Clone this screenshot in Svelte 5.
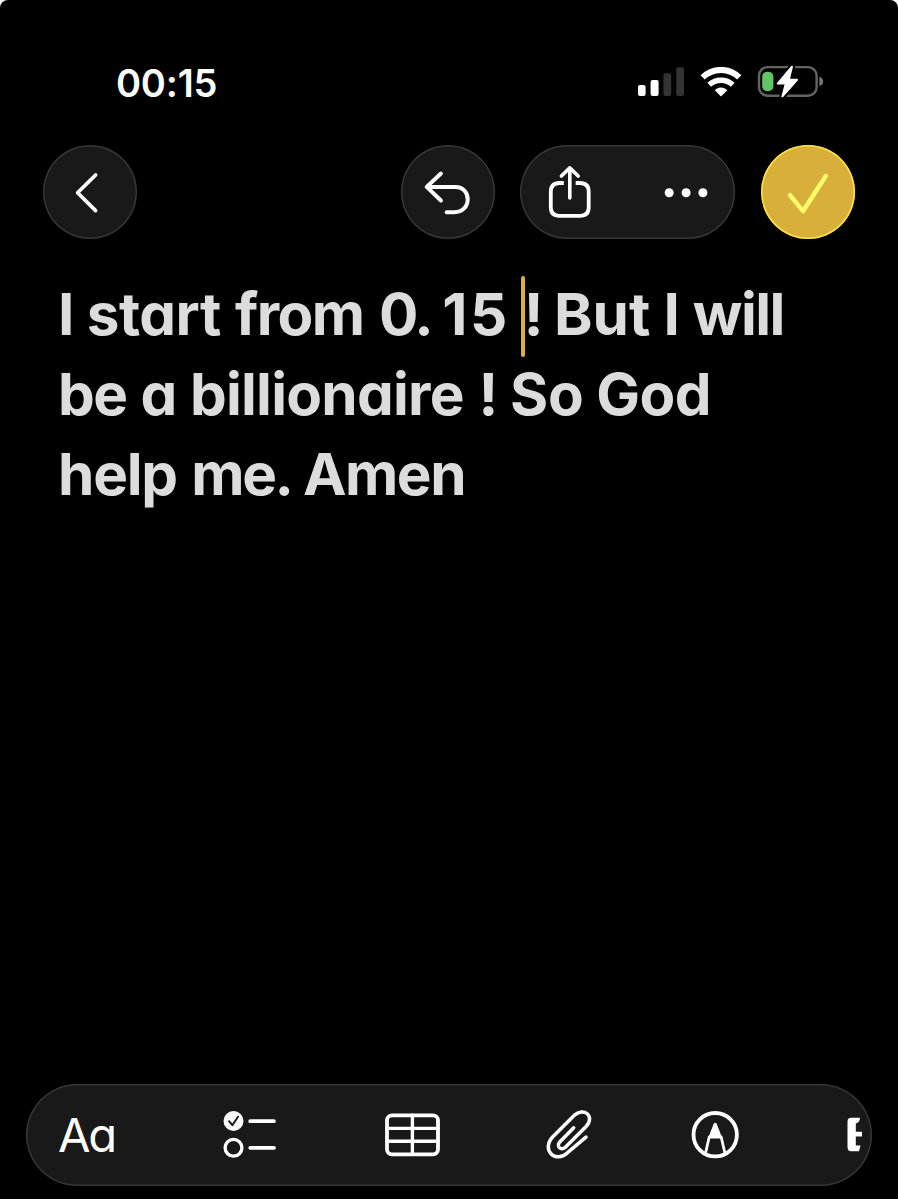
<script>
  // Each word carries its column width and tracking.
  const lines = [
    [
      { t: 'I', w: 28.8, s: 0 },
      { t: 'start', w: 148.3, s: -0.5 },
      { t: 'from', w: 144, s: -1.6 },
      { t: '0.', w: 63.2, s: -2.4 },
      { t: '15', w: 81.5, s: 2.5 },
      { t: '!', w: 30.2, s: 0, caret: true },
      { t: 'But', w: 109.5, s: 0 },
      { t: 'I', w: 29.3, s: 0 },
      { t: 'will', w: 100, s: -1.5 }
    ],
    [
      { t: 'be', w: 82.4, s: -1.5 },
      { t: 'a', w: 49.5, s: 0 },
      { t: 'billionaire', w: 288.6, s: -0.75 },
      { t: '!', w: 31.4, s: 0 },
      { t: 'So', w: 86.3, s: 0 },
      { t: 'God', w: 130, s: -0.5 }
    ],
    [
      { t: 'help', w: 133.3, s: -1.2 },
      { t: 'me.', w: 111.7, s: -2.4 },
      { t: 'Amen', w: 180, s: -1.5 }
    ]
  ];
</script>

<main class="screen">
  <header class="status">
    <time>00:15</time>
    <div class="indicators">
      <svg class="signal" width="48" height="32" viewBox="0 0 48 32">
        <rect x="1" y="18" width="7.6" height="11" rx="2" fill="#fff" />
        <rect x="13.6" y="13" width="8" height="16" rx="2" fill="#fff" />
        <rect x="26.4" y="6.3" width="7.8" height="22.7" rx="2" fill="#333" />
        <rect x="39.2" y="0.3" width="7.8" height="28.7" rx="2" fill="#333" />
      </svg>
      <svg class="wifi" width="42" height="32" viewBox="0 0 42 32" fill="none">
        <path d="M2.6 10.4C13 .4 29.2 .4 39.2 10.4" stroke-width="6" />
        <path d="M9.2 17.8C15.8 11.8 26.2 11.8 32.8 17.8" stroke-width="5.4" />
        <path d="M21 29.4L14.8 23.2C18.3 19.6 23.7 19.6 27.2 23.2Z" fill="#fff" stroke="none" />
      </svg>
      <svg class="battery" width="68" height="36" viewBox="0 0 68 36">
        <rect x="2" y="4.1" width="57.6" height="28.6" rx="8.5" fill="none" stroke="#646464" stroke-width="2.4" />
        <path d="M62.4 13.8C67.4 15.4 67.4 21.6 62.4 23.2Z" fill="#777" />
        <rect x="5.2" y="8.8" width="11.2" height="19.4" rx="5" fill="#61c466" />
        <path d="M35 3.6L20.7 20.6H28.8L25.4 33.4L40 16.8H31.8Z" fill="#000" stroke="#000" stroke-width="6" stroke-linejoin="round" />
        <path d="M35 3.6L20.7 20.6H28.8L25.4 33.4L40 16.8H31.8Z" fill="#fff" stroke="#fff" stroke-width="2" stroke-linejoin="round" />
      </svg>
    </div>
  </header>

  <nav class="actions">
    <button class="glass round" aria-label="Back">
      <svg width="94" height="94" viewBox="0 0 94 94"><path d="M52.6 30L34.6 47.8L52.6 65.6" stroke-width="3.7" /></svg>
    </button>
    <span class="spacer"></span>
    <button class="glass round" aria-label="Undo">
      <svg width="94" height="94" viewBox="0 0 94 94"><path d="M39.9 28.5L25.7 41.9L39.9 55.5M25.9 41.9H54.4C62.4 41.9 66.7 48 66.7 54.2C66.7 61.5 61.4 67.2 53.4 67.2H45.6" stroke-width="4" /></svg>
    </button>
    <div class="glass pill">
      <button aria-label="Share">
        <svg width="108" height="94" viewBox="0 0 108 94"><path class="butt" d="M43.8 38H39.5Q30.8 38 30.8 46.6V62.2Q30.8 70.8 39.5 70.8H60Q68.7 70.8 68.7 62.2V46.6Q68.7 38 60 38H55.7" stroke-width="3.8" /><path d="M49.8 53V23.4M41.4 31L49.8 22.9L58.2 31" stroke-width="3.6" /></svg>
      </button>
      <button aria-label="More">
        <svg width="107" height="94" viewBox="0 0 107 94" class="solid"><circle cx="41.2" cy="47.8" r="4.5" /><circle cx="58.1" cy="47.8" r="4.5" /><circle cx="74.9" cy="47.8" r="4.5" /></svg>
      </button>
    </div>
    <button class="glass round done" aria-label="Done">
      <svg width="94" height="94" viewBox="0 0 94 94"><path d="M29 50.2L42 66.2L64.8 31" stroke-width="4.5" /></svg>
    </button>
  </nav>

  <section class="note">
    {#each lines as words}
      <div class="line">
        {#each words as word}
          <span class="word" style="width:{word.w}px;letter-spacing:{word.s}px">{#if word.caret}<i class="caret"></i>{/if}{word.t}</span>
        {/each}
      </div>
    {/each}
  </section>

  <footer class="glass tools">
    <span class="format">Aa</span>
    <svg class="check" width="54" height="50" viewBox="0 0 54 50">
      <circle cx="10.5" cy="11" r="10" fill="#fff" stroke="none" />
      <path d="M6 11.2L9.4 15.2L15 6.7" stroke="#191919" stroke-width="2" />
      <circle cx="10.5" cy="37.8" r="8.4" stroke-width="3.3" />
      <path d="M27.2 11.2H51M27.2 37.8H51" stroke-width="3.7" />
    </svg>
    <svg class="table" width="56" height="46" viewBox="0 0 56 46">
      <rect x="2" y="3.3" width="51" height="39" rx="5" stroke-width="3.8" />
      <path d="M2 16.4H53M2 29.2H53M27.4 3.3V42.3" stroke-width="3.4" />
    </svg>
    <svg class="clip" width="50" height="54" viewBox="0 0 50 54">
      <path d="M27.7 18.8L14 32.7C9.7 37.3 15 42.4 19.6 38L40.1 17.4C49.6 7.1 37.6 -2.4 28.1 6.4L6.8 27.8C-5.4 40.9 9.6 55.1 21.8 43.4L40 28.2" stroke-width="3.5" />
    </svg>
    <svg class="markup" width="50" height="50" viewBox="0 0 50 50">
      <circle cx="24.2" cy="24.7" r="21.7" stroke-width="3.8" />
      <path d="M14.6 43L18.2 27H30.2L33.9 43" stroke-width="2.8" />
      <path d="M17.2 28L22.6 14Q24.2 11.5 25.8 14L31.2 28Z" fill="#fff" stroke="none" />
    </svg>
    <svg class="partial" width="16" height="36" viewBox="0 0 16 36">
      <path d="M4 .8H13Q12.8 5.6 8.8 6.6V14.8H15V19.4H8.8V28.4H13.5L12 34.3H4Q.5 34.3 .5 29.8V4.8Q.5 .8 4 .8Z" fill="#fff" stroke="none" />
    </svg>
  </footer>
</main>

<style>
  :global(body) { margin: 0; background: #fff; }
  .screen {
    box-sizing: border-box; width: 898px; height: 1199px; overflow: hidden;
    display: flex; flex-direction: column; background: #000; border-radius: 8px 8px 0 0;
    color: #fff; font-family: Inter, "Liberation Sans", sans-serif;
  }
  svg { display: block; flex: none; fill: none; stroke: #fff; stroke-linecap: round; stroke-linejoin: round; }
  .butt { stroke-linecap: butt; }
  .status svg { stroke: none; stroke-linecap: butt; }
  .status svg.wifi { stroke: #fff; }
  .status { display: flex; justify-content: space-between; height: 145px; padding: 0 73px 0 116px; box-sizing: border-box; }
  time { padding-top: 60px; line-height: 46px; font-size: 38px; font-weight: 600; letter-spacing: -0.2px; height: 46px; }
  .indicators { display: flex; padding-top: 67px; align-items: flex-start; }
  .wifi { margin-left: 15px; }
  .battery { margin: -4px 0 0 15px; }
  .actions { display: flex; padding: 0 43px; height: 94px; flex: none; }
  .spacer { flex: 1; }
  button { appearance: none; border: 0; padding: 0; margin: 0; background: none; display: block; }
  .glass { box-sizing: border-box; background: #191919; box-shadow: inset 0 0 0 1.5px #363636; }
  .round { width: 94px; height: 94px; border-radius: 50%; }
  .pill { display: flex; width: 215px; height: 94px; margin: 0 25.6px 0 25.8px; border-radius: 47px; }
  .solid { fill: #fff; stroke: none; }
  .done { background: #d9af3c; box-shadow: inset 0 0 0 1.6px #fae047; }
  .done svg { stroke: #fffa6a; }
  .note { flex: 1; padding: 35px 0 0 58px; color: #dcdcdc; font-size: 58.4px; font-weight: 700; line-height: 80px; font-feature-settings: "cv11"; }
  .line { display: flex; height: 80px; }
  .word { position: relative; flex: none; white-space: pre; }
  .caret { position: absolute; left: -3px; top: 2px; width: 4.2px; height: 81px; border-radius: 2px; background: #dcb040; }
  .tools { display: flex; align-items: center; flex: none; width: 846px; height: 102px; margin: 0 0 13px 26px; border-radius: 51px; padding-left: 32px; }
  .format { width: 165px; font-size: 47.2px; font-weight: 400; line-height: 56px; letter-spacing: -2.4px; font-feature-settings: "cv11"; }
  .check { margin-right: 108px; }
  .table { margin-right: 105px; }
  .clip { margin: 2px 95px 0 0; }
  .markup { margin-right: 106px; }
</style>
